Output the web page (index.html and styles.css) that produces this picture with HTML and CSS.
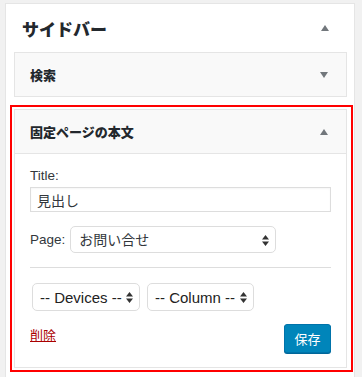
FILE: index.html
```html
<!DOCTYPE html>
<html lang="ja">
<head>
<meta charset="utf-8">
<title>サイドバー</title>
<link rel="stylesheet" href="styles.css">
</head>
<body>
<div class="card">
  <div class="card-head">
    <h2 class="card-title">サイドバー</h2>
    <svg class="tri" width="8" height="6" viewBox="0 0 8 6"><path d="M4 0 L8 6 L0 6 Z"/></svg>
  </div>
  <div class="widgets">
    <div class="widget collapsed">
      <div class="widget-head">
        <h3 class="widget-title">検索</h3>
        <svg class="tri" width="8" height="6" viewBox="0 0 8 6"><path d="M0 0 L8 0 L4 6 Z"/></svg>
      </div>
    </div>
    <div class="highlight">
      <div class="widget">
        <div class="widget-head">
          <h3 class="widget-title">固定ページの本文</h3>
          <svg class="tri" width="8" height="6" viewBox="0 0 8 6"><path d="M4 0 L8 6 L0 6 Z"/></svg>
        </div>
        <div class="widget-body">
          <label class="lbl">Title:</label>
          <input class="text-input" type="text" value="見出し">
          <div class="page-row">
            <label class="lbl-inline">Page:</label>
            <span class="sel-wrap sel-page">
              <select class="sel"><option>お問い合せ</option></select>
              <svg class="updown" width="7" height="11" viewBox="0 0 7 11"><path d="M3.5 0 L7 4.5 L0 4.5 Z M0 6.5 L7 6.5 L3.5 11 Z"/></svg>
            </span>
          </div>
          <hr class="sep">
          <div class="opt-row">
            <span class="sel-wrap sel-dev">
              <select class="sel"><option>-- Devices --</option></select>
              <svg class="updown" width="7" height="11" viewBox="0 0 7 11"><path d="M3.5 0 L7 4.5 L0 4.5 Z M0 6.5 L7 6.5 L3.5 11 Z"/></svg>
            </span>
            <span class="sel-wrap sel-col">
              <select class="sel"><option>-- Column --</option></select>
              <svg class="updown" width="7" height="11" viewBox="0 0 7 11"><path d="M3.5 0 L7 4.5 L0 4.5 Z M0 6.5 L7 6.5 L3.5 11 Z"/></svg>
            </span>
          </div>
          <div class="actions">
            <a class="del" href="#">削除</a>
            <button class="save" type="button">保存</button>
          </div>
        </div>
      </div>
    </div>
  </div>
</div>
</body>
</html>
```

FILE: styles.css
```css
html, body {
  margin: 0;
  padding: 0;
}
body {
  background: #f1f1f1;
  font-family: "Liberation Sans", "Noto Sans CJK JP", sans-serif;
  color: #32373c;
  font-size: 13px;
}
.card {
  margin: 3px 0 0 5px;
  width: 348px;
  background: #fff;
  border: 1px solid #e5e5e5;
  border-bottom: none;
  min-height: 380px;
}
.card-head {
  height: 48px;
  display: flex;
  align-items: center;
  justify-content: space-between;
  padding: 0 25px 0 16px;
}
.card-title {
  margin: 0;
  font-size: 17px;
  font-weight: 900;
  color: #23282d;
  font-family: "Noto Sans CJK JP", sans-serif;
  line-height: 1;
}
.tri {
  fill: #72777c;
  display: block;
}
.widgets {
  padding: 0 7px 0 8px;
}
.widget {
  width: 331px;
  border: 1px solid #e5e5e5;
  background: #fff;
}
.widget-head {
  height: 43px;
  background: #f9f9f9;
  display: flex;
  align-items: center;
  justify-content: space-between;
  padding: 0 18px 0 15px;
}
.widget-title {
  margin: 0;
  font-size: 13px;
  font-weight: 900;
  color: #23282d;
  font-family: "Noto Sans CJK JP", sans-serif;
}
.highlight {
  margin: 8px 0 0 -4px;
  width: 335px;
  border: 2px solid #ff0000;
  padding: 2px;
}
.highlight .widget-head {
  border-bottom: 1px solid #e5e5e5;
}
.widget-body {
  padding: 12px 15px 14px;
}
.lbl {
  display: block;
  line-height: 19px;
  margin-bottom: 2px;
  font-size: 13.5px;
}
.text-input {
  box-sizing: border-box;
  display: block;
  width: 301px;
  height: 25px;
  margin: 0;
  padding: 0 6px;
  border: 1px solid #ddd;
  border-radius: 0;
  font-family: "Liberation Sans", "Noto Sans CJK JP", sans-serif;
  font-size: 14px;
  color: #32373c;
  box-shadow: inset 0 1px 2px rgba(0,0,0,0.04);
  outline: none;
}
.page-row {
  display: flex;
  align-items: center;
  margin-top: 14px;
}
.lbl-inline {
  margin-right: 5px;
  font-size: 13.5px;
}
.sel-wrap {
  position: relative;
  display: inline-block;
}
.sel {
  -webkit-appearance: none;
  appearance: none;
  box-sizing: border-box;
  display: block;
  margin: 0;
  border: 1px solid #ddd;
  border-radius: 5px;
  background: #fff;
  font-family: "Liberation Sans", "Noto Sans CJK JP", sans-serif;
  font-size: 14px;
  color: #32373c;
  outline: none;
}
.sel-page .sel {
  width: 206px;
  height: 27px;
  padding: 0 20px 0 8px;
}
.updown {
  position: absolute;
  right: 7px;
  top: 50%;
  margin-top: -5px;
  fill: #333;
}
.sep {
  border: 0;
  border-top: 1px solid #ddd;
  margin: 14px 0 15px;
  height: 0;
}
.opt-row {
  display: flex;
  gap: 7px;
  padding-left: 2px;
}
.sel-dev .sel,
.sel-col .sel {
  height: 28px;
  padding: 0 10px 0 7px;
  font-size: 15px;
  color: #222;
}
.sel-dev .sel {
  width: 108px;
}
.sel-col .sel {
  width: 107px;
}
.actions {
  display: flex;
  justify-content: space-between;
  align-items: flex-start;
  margin-top: 13px;
}
.del {
  color: #a00;
  text-decoration: underline;
  font-size: 13px;
  line-height: 19px;
  margin-top: 1px;
  font-family: "Noto Sans CJK JP", sans-serif;
}
.save {
  box-sizing: border-box;
  width: 47px;
  height: 29px;
  margin: 0;
  padding: 0;
  background: #0085ba;
  border: 1px solid #0073aa;
  border-radius: 3px;
  box-shadow: 0 1px 0 #006799;
  color: #fff;
  font-size: 13px;
  font-family: "Noto Sans CJK JP", sans-serif;
}
```
